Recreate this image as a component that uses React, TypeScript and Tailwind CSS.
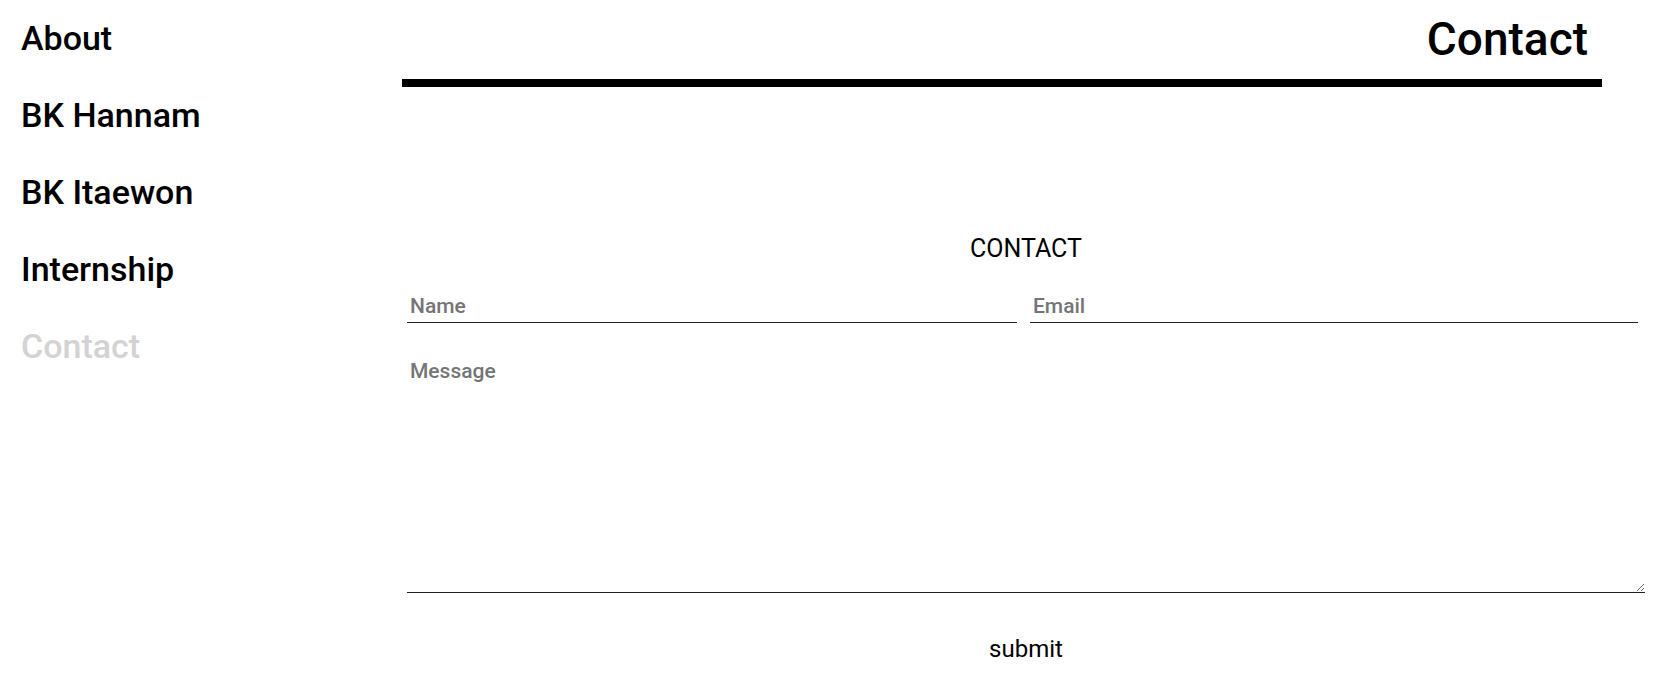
import React from 'react';

const navItems = [
  { label: 'About', active: false },
  { label: 'BK Hannam', active: false },
  { label: 'BK Itaewon', active: false },
  { label: 'Internship', active: false },
  { label: 'Contact', active: true },
];

const App: React.FC = () => {
  return (
    <div className="flex min-h-[682px] w-full bg-white text-black font-['Roboto',sans-serif] font-medium">
      <aside className="w-[402px] shrink-0 pl-[21px]">
        <nav className="flex flex-col">
          {navItems.map((item) => (
            <a
              key={item.label}
              href="#"
              className={`block h-[77px] text-[34px] leading-[77px] ${item.active ? 'text-[#d3d3d3]' : 'text-black'}`}
            >
              {item.label}
            </a>
          ))}
        </nav>
      </aside>

      <main className="flex-1">
        <div className="w-[1200px] pt-[12px]">
          <h1 className="pr-[14px] text-right text-[46px] leading-[54px] font-medium">Contact</h1>
          <div className="mt-[13px] h-2 bg-black"></div>
        </div>

        <form className="ml-[5px] mr-[21px] mt-[148px]" onSubmit={(e) => e.preventDefault()}>
          <h2 className="text-center text-[25px] leading-[28px] font-normal">CONTACT</h2>

          <div className="mt-[31px] flex gap-[13px]">
            <input
              type="text"
              placeholder="Name"
              className="w-[610px] border-b border-[#222] px-[3px] pb-[3px] text-[21px] leading-[25px] outline-none placeholder:text-[#757575]"
            />
            <input
              type="email"
              placeholder="Email"
              className="w-[608px] border-b border-[#222] px-[3px] pb-[3px] text-[21px] leading-[25px] outline-none placeholder:text-[#757575]"
            />
          </div>

          <textarea
            placeholder="Message"
            className="mt-[30px] block h-[240px] w-full border-b border-[#222] px-[3px] pt-[6px] text-[21px] leading-[25px] outline-none placeholder:text-[#757575]"
          ></textarea>

          <div className="mt-[42px] text-center">
            <button type="submit" className="text-[24px] leading-[28px] font-normal">
              submit
            </button>
          </div>
        </form>
      </main>
    </div>
  );
};

export default App;
